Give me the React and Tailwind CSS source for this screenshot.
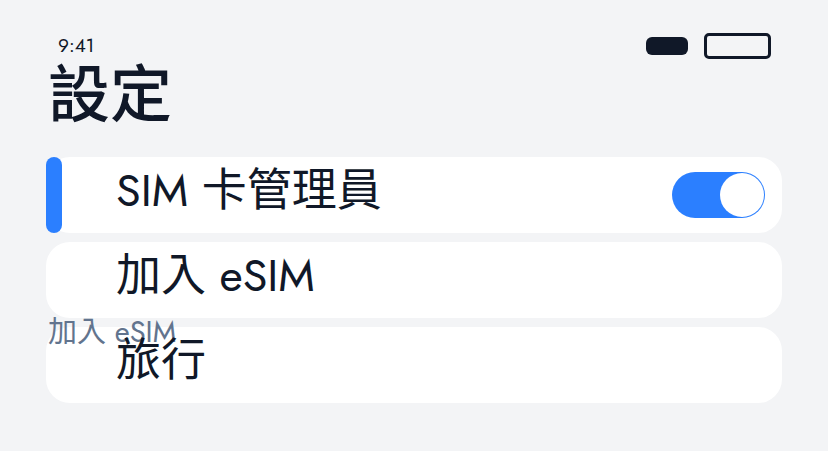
import React from 'react';

const font = { fontFamily: "Jost, 'Noto Sans CJK TC', sans-serif" };

const Toggle = ({ on }) => (
    <div className={`w-[93px] h-[46px] rounded-full p-[1px] flex ${on ? 'bg-blue-500 justify-end' : 'bg-gray-300 justify-start'}`}>
        <div className="w-[44px] h-[44px] rounded-full bg-white"></div>
    </div>
);

const Row = ({ label, active, children }) => (
    <div className="relative h-[76px] bg-white rounded-3xl flex items-stretch">
        <div className={`w-[16px] rounded-full ${active ? 'bg-blue-500' : ''}`}></div>
        <div className="flex-1 pl-[54px] pt-[5px] text-[45px] leading-[58px] text-gray-900 relative z-20">{label}</div>
        {children && <div className="flex items-center pr-[17px]">{children}</div>}
    </div>
);

export default function App() {
    return (
        <div className="min-h-[451px] bg-gray-100 px-[46px]" style={font}>
            {/* status bar */}
            <div className="flex items-center justify-between pt-[33px] pl-[12px] pr-[11px]">
                <span className="text-[19px] leading-[26px] text-gray-900">9:41</span>
                <div className="flex items-center gap-[16px]">
                    <div className="w-[42px] h-[18px] rounded-[6px] bg-gray-900"></div>
                    <div className="w-[67px] h-[26px] rounded-[5px] border-[3px] border-gray-900"></div>
                </div>
            </div>

            <h1 className="text-[62px] leading-[72px] font-medium text-gray-900 pl-[2px] mt-[1px]">設定</h1>

            <div className="relative flex flex-col gap-[9px] mt-[25px]">
                <Row label="SIM 卡管理員" active>
                    <Toggle on />
                </Row>
                <Row label="加入 eSIM" />
                <span className="absolute left-[2px] top-[161px] z-10 text-[29px] leading-none text-slate-500">加入 eSIM</span>
                <Row label="旅行" />
            </div>
        </div>
    );
}
